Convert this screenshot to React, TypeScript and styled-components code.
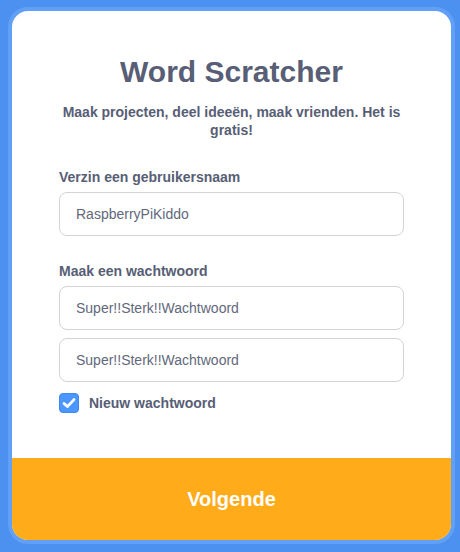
import React from "react";
import styled, { createGlobalStyle } from "styled-components";

const Global = createGlobalStyle`
  html, body {
    margin: 0;
    padding: 0;
    background: #4c90f0;
    font-family: "Liberation Sans", Arial, Helvetica, sans-serif;
  }
  * { box-sizing: border-box; }
`;

const Frame = styled.div`
  margin: 7px 5px 8px 8px;
  height: 537px;
  border: 4px solid #60a0f6;
  border-radius: 20px;
  background: #60a0f6;
`;

const Card = styled.div`
  height: 100%;
  background: #ffffff;
  border-radius: 16px;
  overflow: hidden;
  display: flex;
  flex-direction: column;
  align-items: center;
  padding-top: 43px;
`;

const Title = styled.h1`
  margin: 0;
  font-size: 30px;
  line-height: 36px;
  font-weight: 700;
  color: #575e75;
  text-align: center;
`;

const Subtitle = styled.p`
  margin: 13px 0 0;
  width: 345px;
  font-size: 14px;
  line-height: 18px;
  font-weight: 700;
  color: #575e75;
  text-align: center;
`;

const Form = styled.div`
  width: 345px;
  display: flex;
  flex-direction: column;
`;

const Section = styled.div<{ $top: number; $labelGap: number }>`
  display: flex;
  flex-direction: column;
  margin-top: ${(p) => p.$top}px;
  & > label {
    margin-bottom: ${(p) => p.$labelGap}px;
  }
`;

const Label = styled.label`
  font-size: 14px;
  line-height: 18px;
  font-weight: 700;
  color: #575e75;
`;

const Inputs = styled.div`
  display: flex;
  flex-direction: column;
  gap: 8px;
`;

const Input = styled.input`
  height: 44px;
  width: 100%;
  border: 1px solid #d3d3d3;
  border-radius: 8px;
  padding: 0 16px;
  font-family: "Liberation Sans", Arial, Helvetica, sans-serif;
  font-size: 14px;
  color: #62687c;
  background: #ffffff;
  outline: none;
`;

const CheckRow = styled.label`
  display: flex;
  align-items: center;
  gap: 10px;
  margin-top: 11px;
  font-size: 14px;
  line-height: 18px;
  font-weight: 700;
  color: #575e75;
`;

const Box = styled.span`
  width: 20px;
  height: 20px;
  border-radius: 4px;
  background: #4c97ff;
  border: 1px solid #3f88ec;
  display: flex;
  align-items: center;
  justify-content: center;
`;

const Footer = styled.button`
  margin-top: auto;
  width: 100%;
  height: 82px;
  border: none;
  background: #ffab1a;
  color: #ffffff;
  font-family: "Liberation Sans", Arial, Helvetica, sans-serif;
  font-size: 20px;
  line-height: 22px;
  font-weight: 700;
  display: flex;
  align-items: center;
  justify-content: center;
  cursor: pointer;
`;

export default function App() {
  return (
    <>
      <Global />
      <Frame>
        <Card>
          <Title>Word Scratcher</Title>
          <Subtitle>Maak projecten, deel ideeën, maak vrienden. Het is gratis!</Subtitle>
          <Form>
            <Section $top={29} $labelGap={6}>
              <Label>Verzin een gebruikersnaam</Label>
              <Input readOnly value="RaspberryPiKiddo" />
            </Section>
            <Section $top={26} $labelGap={6}>
              <Label>Maak een wachtwoord</Label>
              <Inputs>
                <Input readOnly value="Super!!Sterk!!Wachtwoord" />
                <Input readOnly value="Super!!Sterk!!Wachtwoord" />
              </Inputs>
            </Section>
            <CheckRow>
              <Box>
                <svg width="16" height="16" viewBox="0 0 16 16">
                  <path
                    d="M3 8.4 L6.4 11.6 L13 4.6"
                    fill="none"
                    stroke="#ffffff"
                    strokeWidth="2.8"
                    strokeLinecap="round"
                    strokeLinejoin="round"
                  />
                </svg>
              </Box>
              Nieuw wachtwoord
            </CheckRow>
          </Form>
          <Footer>Volgende</Footer>
        </Card>
      </Frame>
    </>
  );
}
